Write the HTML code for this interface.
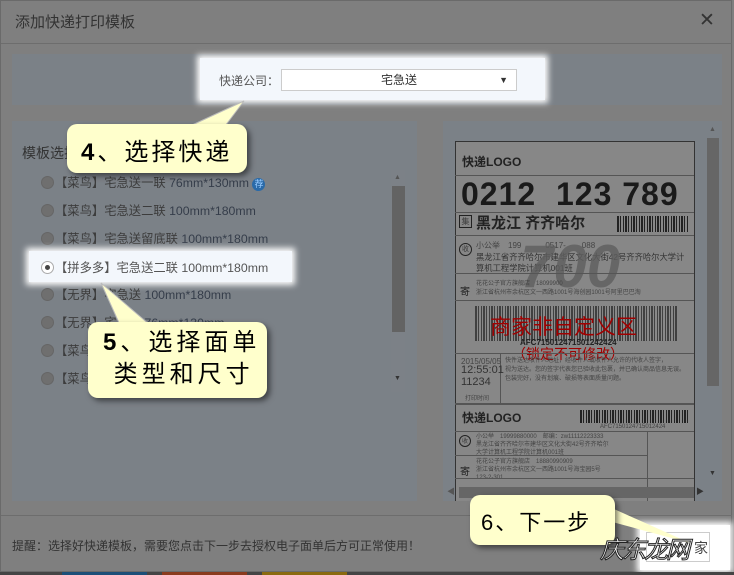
<!DOCTYPE html>
<html><head><meta charset="utf-8"><style>
*{margin:0;padding:0;box-sizing:border-box}
body{width:734px;height:575px;overflow:hidden;background:#7f7f7f;font-family:"Liberation Sans","Noto Sans CJK SC",sans-serif;position:relative;color:#3a3a3a}
.a{position:absolute}
.panel{background:#7b8187}
.call{background:#ffffcc;border-radius:10px;box-shadow:3px 3px 6px rgba(0,0,0,.5);color:#000;font-family:"Liberation Sans","Noto Sans CJK SC",sans-serif}
.row{position:absolute;left:41px;font-size:12.3px;color:#3c3c3c;white-space:nowrap}
.row .r{display:inline-block;width:13px;height:13px;border-radius:50%;background:#6f6f6f;border:1px solid #666;vertical-align:-2px;margin-right:1px}
.row .s{color:#353d4a}
.bar{background:repeating-linear-gradient(90deg,#222 0 2px,#888 2px 3px,#222 3px 4px,#888 4px 6px,#222 6px 7px,#888 7px 8px)}
.lbl{font-size:8px;color:#444;white-space:nowrap}
.hl{position:absolute;left:455px;right:40px;height:1px;background:#555}
</style></head><body>
<div class="a" style="left:0;top:0;width:732px;height:572px;background:#7f7f7f;border:1px solid #6a6a6a"></div>
<div class="a" style="left:15px;top:11px;font-size:15px;color:#333">添加快递打印模板</div>
<div class="a" style="left:699px;top:9px;font-size:19px;color:#333">✕</div>
<div class="a" style="left:1px;top:43px;width:731px;height:1px;background:#6d6d6d"></div>
<div class="a panel" style="left:12px;top:54px;width:710px;height:51px"></div>
<div class="a" style="left:200px;top:58px;width:345px;height:42px;background:#f3f7fc;box-shadow:0 0 6px 3px #fff"></div>
<div class="a" style="left:219px;top:72px;font-size:12px;color:#555">快递公司：</div>
<div class="a" style="left:281px;top:69px;width:236px;height:22px;background:#fff;border:1px solid #ccc;font-size:12px;text-align:center;line-height:20px;color:#333">宅急送<span style="position:absolute;right:8px;font-size:9px">▼</span></div>

<div class="a panel" style="left:12px;top:121px;width:405px;height:380px"></div>
<div class="a" style="left:22px;top:143px;font-size:14px;color:#333">模板选择</div>
<div class="row" style="top:173px"><span class="r"></span>【菜鸟】宅急送一联 <span class="s">76mm*130mm</span> <span style="display:inline-block;width:13px;height:13px;border-radius:50%;background:#2a6aa8;color:#9cf;font-size:9px;text-align:center;line-height:13px">荐</span></div>
<div class="row" style="top:201px"><span class="r"></span>【菜鸟】宅急送二联 <span class="s">100mm*180mm</span></div>
<div class="row" style="top:229px"><span class="r"></span>【菜鸟】宅急送留底联 <span class="s">100mm*180mm</span></div>
<div class="a" style="left:29px;top:251px;width:263px;height:31px;background:#f3f7fc;box-shadow:0 0 6px 3px #fff"></div>
<div class="row" style="top:258px;color:#555"><span class="r" style="background:#fff;border-color:#aaa;position:relative"><span style="position:absolute;left:3px;top:3px;width:5px;height:5px;border-radius:50%;background:#444"></span></span>【拼多多】宅急送二联 <span style="color:#555">100mm*180mm</span></div>
<div class="row" style="top:285px"><span class="r"></span>【无界】宅急送 <span class="s">100mm*180mm</span></div>
<div class="row" style="top:313px"><span class="r"></span>【无界】宅急送 <span class="s">76mm*130mm</span></div>
<div class="row" style="top:341px"><span class="r"></span>【菜鸟】宅急送 <span class="s">100mm*180mm</span></div>
<div class="row" style="top:369px"><span class="r"></span>【菜鸟】宅急送</div>
<div class="a" style="left:391px;top:170px;width:14px;height:222px;background:#7c8187"></div>
<div class="a" style="left:392px;top:186px;width:13px;height:146px;background:#636363"></div>
<div class="a" style="left:394px;top:174px;font-size:7px;color:#555">▲</div>
<div class="a" style="left:394px;top:375px;font-size:7px;color:#333">▼</div>

<div class="a panel" style="left:443px;top:121px;width:279px;height:380px"></div>
<div class="a" style="left:455px;top:141px;width:240px;height:360px;background:#878787;border:1px solid #333;border-bottom:none"></div>
<div class="a lbl" style="left:462px;top:153px;font-size:12px;font-weight:bold;color:#222">快递LOGO</div>
<div class="hl" style="top:175px"></div>
<div class="a" style="left:461px;top:176px;font-size:32px;font-weight:bold;color:#1a1a1a;letter-spacing:1px">0212 &nbsp;123 789</div>
<div class="hl" style="top:212px"></div>
<div class="a" style="left:459px;top:215px;width:13px;height:13px;border:1px solid #222;font-size:8px;text-align:center">集</div>
<div class="a" style="left:476px;top:212px;font-size:15px;font-weight:bold;color:#222">黑龙江 齐齐哈尔</div>
<div class="a bar" style="left:617px;top:216px;width:72px;height:16px"></div>
<div class="hl" style="top:235px"></div>
<div class="a" style="left:459px;top:243px;width:13px;height:13px;border:1px solid #222;border-radius:50%;font-size:7px;text-align:center">收</div>
<div class="a lbl" style="left:476px;top:240px">小公举　199　　　0517-　　088</div>
<div class="a lbl" style="left:476px;top:251px;font-size:8.3px;color:#333">黑龙江省齐齐哈尔市建华区文化大街42号齐齐哈尔大学计</div>
<div class="a lbl" style="left:476px;top:262px;font-size:8.3px;color:#333">算机工程学院计算机001班</div>
<div class="a" style="left:520px;top:232px;font-size:60px;font-weight:bold;color:#5e5e5e;font-style:italic;opacity:.8">700</div>
<div class="hl" style="top:273px"></div>
<div class="a lbl" style="left:460px;top:283px;font-size:10px;color:#222">寄</div>
<div class="a lbl" style="left:476px;top:278px;font-size:6px">花花公子官方旗舰店　18099900</div>
<div class="a lbl" style="left:476px;top:287px;font-size:6px">浙江省杭州市余杭区文一西路1001号海创园1001号阿里巴巴淘</div>
<div class="hl" style="top:300px"></div>
<div class="a bar" style="left:475px;top:306px;width:203px;height:35px;opacity:.7"></div>
<div class="a" style="left:490px;top:311px;font-size:21px;color:#a00000">商家非自定义区</div>
<div class="a lbl" style="left:520px;top:338px;font-size:8px;color:#222;font-weight:bold">AFC715012471501242424</div>
<div class="a" style="left:512px;top:344px;font-size:14px;color:#a00000">（锁定不可修改）</div>
<div class="hl" style="top:353px"></div>
<div class="a" style="left:500px;top:353px;width:1px;height:50px;background:#555"></div>
<div class="a lbl" style="left:461px;top:357px">2015/05/05</div>
<div class="a" style="left:461px;top:364px;font-size:11px;color:#333;line-height:12px">12:55:01<br>11234</div>
<div class="a lbl" style="left:505px;top:357px;font-size:6px;line-height:9px">快件送达收件人地址，经收件人或收件人允许的代收人签字，<br>视为送达。您的签字代表您已验收此包裹，并已确认商品信息无误。<br>包装完好，没有划痕、破损等表面质量问题。</div>
<div class="a lbl" style="left:465px;top:393px;font-size:6px">打印时间</div>
<div class="hl" style="top:403px;height:2px"></div>
<div class="a lbl" style="left:462px;top:409px;font-size:12px;font-weight:bold;color:#222">快递LOGO</div>
<div class="a bar" style="left:580px;top:410px;width:110px;height:13px"></div>
<div class="a lbl" style="left:600px;top:424px;font-size:6px">AFC7150124715012424</div>
<div class="hl" style="top:431px"></div>
<div class="a" style="left:459px;top:435px;width:12px;height:12px;border:1px solid #222;border-radius:50%;font-size:6px;text-align:center">收</div>
<div class="a lbl" style="left:476px;top:433px;font-size:6px;line-height:8px">小公举　19999880000　邮编：zw11112223333<br>黑龙江省齐齐哈尔市建华区文化大街42号齐齐哈尔<br>大学计算机工程学院计算机001班</div>
<div class="a" style="left:647px;top:431px;width:1px;height:70px;background:#555"></div>
<div class="hl" style="top:455px;right:87px"></div>
<div class="a lbl" style="left:460px;top:463px;font-size:10px;color:#222">寄</div>
<div class="a lbl" style="left:476px;top:458px;font-size:6px;line-height:8px">花花公子官方旗舰店　18880990909<br>浙江省杭州市余杭区文一西路1001号海宝园5号<br>123-2-301</div>
<div class="hl" style="top:478px"></div>
<div class="a" style="left:707px;top:138px;width:12px;height:248px;background:#666"></div>
<div class="a" style="left:709px;top:126px;font-size:7px;color:#555">▲</div>
<div class="a" style="left:709px;top:470px;font-size:7px;color:#333">▼</div>
<div class="a" style="left:459px;top:487px;width:235px;height:11px;background:#666"></div>
<div class="a" style="left:447px;top:486px;font-size:8px;color:#555">◀</div>
<div class="a" style="left:696px;top:486px;font-size:8px;color:#333">▶</div>

<div class="a" style="left:1px;top:515px;width:731px;height:1px;background:#6d6d6d"></div>
<div class="a" style="left:12px;top:537px;font-size:12px;color:#333">提醒：选择好快递模板，需要您点击下一步去授权电子面单后方可正常使用！</div>
<div class="a" style="left:640px;top:525px;width:90px;height:45px;background:#fff;box-shadow:0 0 6px 3px #fff"></div>
<div class="a" style="left:646px;top:532px;width:64px;height:30px;border:1px solid #ccc"></div>
<div class="a" style="left:694px;top:538px;font-size:14px;color:#444">家</div>
<div class="a" style="left:0;top:572px;width:734px;height:3px;background:#444"></div>
<div class="a" style="left:62px;top:572px;width:85px;height:3px;background:#1c4f78"></div>
<div class="a" style="left:162px;top:572px;width:85px;height:3px;background:#8a3b1e"></div>
<div class="a" style="left:262px;top:572px;width:85px;height:3px;background:#8a6a10"></div>

<svg class="a" style="left:0;top:0" width="734" height="575">
<polygon points="190,126 225,126 244,101" fill="#ffffcc" stroke="#bbb" stroke-width="1"/>
<polygon points="120,325 150,325 101,283" fill="#ffffcc" stroke="#bbb"/>
<polygon points="605,520 605,505 690,543" fill="#ffffcc"/>
</svg>
<div class="a call" style="left:67px;top:124px;width:180px;height:49px"></div>
<div class="a" style="left:81px;top:132px;font-size:24px;color:#000;letter-spacing:3px"><b>4</b>、选择快递</div>
<div class="a call" style="left:88px;top:322px;width:179px;height:76px"></div>
<div class="a" style="left:103px;top:327px;font-size:24px;line-height:32px;letter-spacing:4px;color:#000"><b>5</b>、选择面单<br>&nbsp;类型和尺寸</div>
<div class="a call" style="left:470px;top:495px;width:145px;height:50px"></div>
<div class="a" style="left:481px;top:505px;font-size:22px;color:#000;letter-spacing:2px">6、下一步</div>
<div class="a" style="left:600px;top:530px;font-size:24px;color:#fff;font-style:italic;-webkit-text-stroke:1px #222;letter-spacing:-2px">庆东龙网</div>
</body></html>
